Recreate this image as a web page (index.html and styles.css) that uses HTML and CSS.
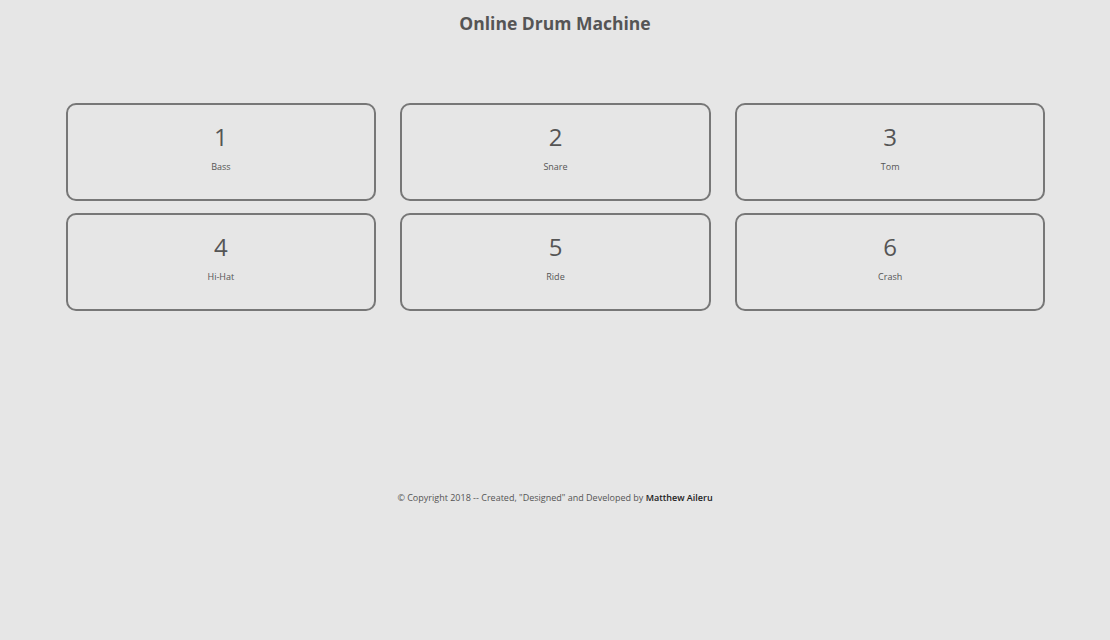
FILE: index.html
```html
<!DOCTYPE html>
<html>
<head>
<meta charset="utf-8">
<title>Online Drum Machine</title>
<link rel="stylesheet" href="styles.css">
</head>
<body>
<header class="header">
  <h1 class="title">Online Drum Machine</h1>
</header>
<main class="pads">
  <div class="pad"><span class="key">1</span><span class="name">Bass</span></div>
  <div class="pad"><span class="key">2</span><span class="name">Snare</span></div>
  <div class="pad"><span class="key">3</span><span class="name">Tom</span></div>
  <div class="pad"><span class="key">4</span><span class="name">Hi-Hat</span></div>
  <div class="pad"><span class="key">5</span><span class="name">Ride</span></div>
  <div class="pad"><span class="key">6</span><span class="name">Crash</span></div>
</main>
<footer class="footer">
  <p class="copy">© Copyright 2018 -- Created, "Designed" and Developed by <a class="author" href="#">Matthew Aileru</a></p>
</footer>
</body>
</html>
```
FILE: styles.css
```css
html, body {
  margin: 0;
  padding: 0;
  background: #e6e6e6;
  color: #555;
  font-family: "Open Sans", "DejaVu Sans", sans-serif;
}
.header {
  display: flex;
  justify-content: center;
  padding-top: 11px;
}
.title {
  margin: 0;
  font-size: 17.5px;
  line-height: 24px;
  font-weight: 700;
  color: #555;
}
.pads {
  box-sizing: border-box;
  width: 981px;
  padding-left: 1px;
  margin: 68px auto 0;
  display: grid;
  grid-template-columns: repeat(3, 1fr);
  column-gap: 24px;
  row-gap: 12px;
}
.pad {
  box-sizing: border-box;
  height: 98px;
  border: 2px solid #777;
  border-radius: 10px;
  display: flex;
  flex-direction: column;
  align-items: center;
  padding-top: 16px;
}
.key {
  font-size: 24px;
  line-height: 32px;
  color: #555;
}
.name {
  margin-top: 8px;
  font-size: 9px;
  line-height: 12px;
  color: #555;
}
.footer {
  display: flex;
  justify-content: center;
  margin-top: 181px;
}
.copy {
  margin: 0;
  font-size: 9px;
  line-height: 12px;
  color: #555;
}
.author {
  color: #222;
  font-weight: 600;
  text-decoration: none;
}
```
